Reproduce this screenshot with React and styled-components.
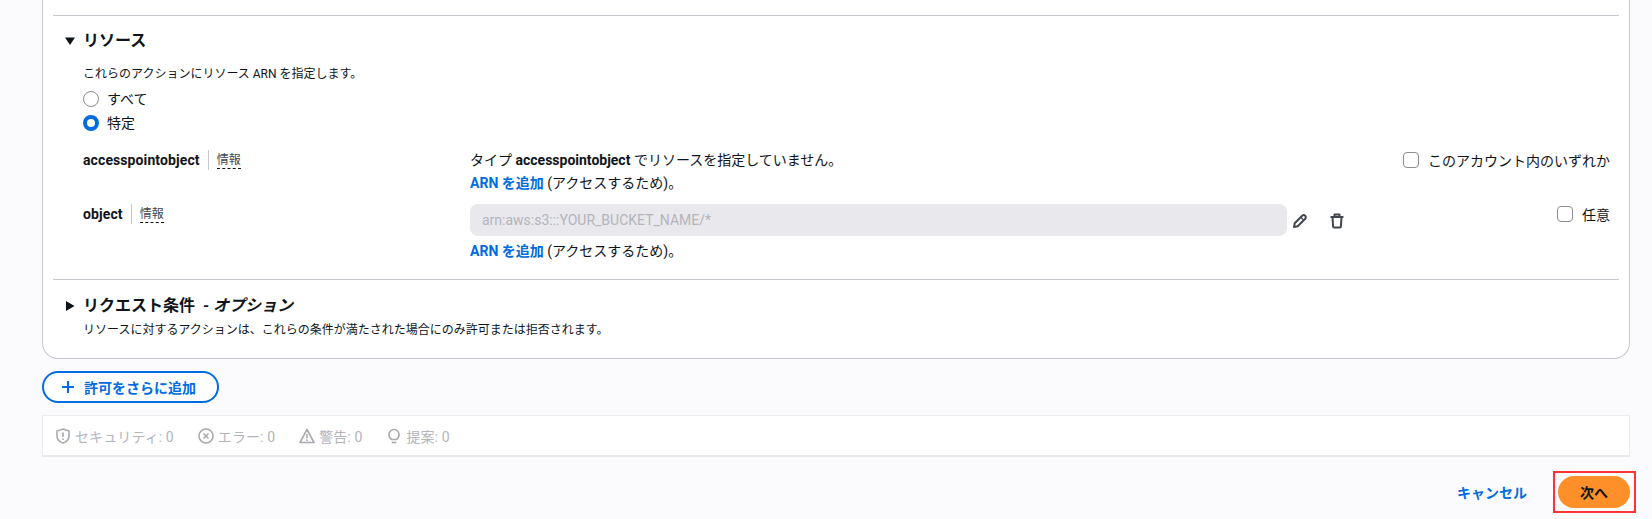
import React from "react";
import styled, { createGlobalStyle } from "styled-components";

const FONT = `Roboto, "Noto Sans CJK JP", sans-serif`;

const Global = createGlobalStyle`
  html, body { margin: 0; padding: 0; background: #fbfbfe; }
  body { font-family: ${FONT}; color: #0f141a; font-size: 14px; }
`;
const Page = styled.div`
  width: 1652px; height: 519px; overflow: hidden; box-sizing: border-box;
  padding: 0 22px 0 42px; display: flex; flex-direction: column;
`;
const Card = styled.section`
  background: #fff; border: 1px solid #c6c6cd; border-top: 0; border-radius: 0 0 16px 16px;
  height: 359px; box-sizing: border-box; padding: 15px 10px 0;
`;
const Divider = styled.hr`
  margin: 0; border: 0; border-top: 1px solid #c6c6cd;
`;
const Section = styled.div`
  padding: ${p => p.$top}px 0 0 30px; height: ${p => p.$height}px; box-sizing: border-box;
`;
const Heading = styled.h3`
  position: relative; margin: 0; font-size: 16px; line-height: 20px; font-weight: 700; color: #0f141a;
`;
const Caret = styled.svg`
  position: absolute; left: -19px; top: 4px; width: 12px; height: 12px; fill: #0f141a;
`;
const Option = styled.em`
  font-style: italic; margin-left: 8px;
`;
const Desc = styled.p`
  margin: ${p => p.$top}px 0 0; font-size: 12px; line-height: 16px; color: #0f141a;
`;
const RadioGroup = styled.div`
  display: flex; flex-direction: column; gap: 4px; margin-top: 7px;
`;
const RadioRow = styled.label`
  display: flex; align-items: center; gap: 8px; height: 20px; line-height: 20px; color: #0f141a; font-size: 14px;
`;
const RadioDot = styled.span`
  width: 16px; height: 16px; box-sizing: border-box; border-radius: 50%;
  background: #fff;
  border: ${p => (p.$on ? "4.5px solid #006ce0" : "1px solid #8c8c94")};
`;
const ResRow = styled.div`
  display: grid; grid-template-columns: 387px 1fr auto; align-items: start;
  margin-top: ${p => p.$top}px;
`;
const NameCell = styled.div`
  display: flex; align-items: center; height: 20px;
`;
const Name = styled.b`
  font-size: 14px; font-weight: 700; line-height: 20px; letter-spacing: 0.1px;
`;
const Sep = styled.span`
  width: 1px; height: 20px; background: #c6c6cd; margin: 0 8px;
`;
const Info = styled.span`
  font-size: 12px; line-height: 16px; color: #424650; border-bottom: 1px dashed #0f141a; height: 16px; margin-top: 1px;
`;
const Line = styled.div`
  font-size: 14px; line-height: 20px; color: #0f141a; margin-top: ${p => p.$top || 0}px;
`;
const Strong = styled.b`
  font-weight: 700;
`;
const Link = styled.a`
  color: #006ce0; font-weight: 700;
`;
const InputRow = styled.div`
  display: flex; align-items: center;
`;
const Field = styled.div`
  width: 817px; height: 32px; box-sizing: border-box; padding: 0 12px; display: flex; align-items: center;
  background: #e8e8ed; border-radius: 8px; color: #b4b4bb; font-size: 14px;
`;
const IconBtn = styled.span`
  display: flex; width: 16px; height: 16px; margin: 2px 0 0 ${p => p.$gap}px; color: #424650;
`;
const CheckRow = styled.label`
  display: flex; align-items: center; justify-content: flex-end; gap: 9px; height: 20px; font-size: 14px; color: #0f141a; padding-right: 9px;
`;
const CheckBox = styled.span`
  width: 16px; height: 16px; box-sizing: border-box; border: 1px solid #8c8c94; border-radius: 4px; background: #fff;
`;
const AddButton = styled.button`
  align-self: flex-start; margin-top: 12px; width: 177px; height: 32px; box-sizing: border-box;
  border: 2px solid #006ce0; border-radius: 20px; background: #fff; color: #006ce0;
  font: 700 14px ${FONT};
  display: flex; align-items: center; gap: 8px; padding: 0 0 0 16px;
`;
const StatusBar = styled.div`
  margin-top: 12px; height: 42px; box-sizing: border-box; background: #fff;
  border: 1px solid #ebebf0; border-bottom: 2px solid #e8e8ed;
  display: flex; align-items: center; gap: 24px; padding: 0 12px;
`;
const Stat = styled.span`
  display: inline-flex; align-items: center; gap: 4px; color: #b4b4bb; font-size: 14px; letter-spacing: 0.1px;
`;
const StatIcon = styled.svg`
  width: 16px; height: 16px; fill: none; stroke: #a9a9b1; stroke-width: 1.6;
`;
const Footer = styled.div`
  display: flex; justify-content: flex-end; align-items: center; margin-top: 14px; height: 42px;
`;
const Cancel = styled.a`
  color: #006ce0; font-weight: 700; font-size: 14px; margin-right: 26px;
`;
const Highlight = styled.div`
  width: 83px; height: 42px; box-sizing: border-box; border: 2px solid #f33; margin-right: -6px;
  display: flex; align-items: center; justify-content: flex-start; padding-left: 3px;
`;
const Primary = styled.button`
  width: 72px; height: 32px; border: 0; border-radius: 20px; background: #ff9029; color: #0f141a;
  font: 700 14px ${FONT}; padding: 0;
`;

const Pencil = () => (
  <svg viewBox="0 0 16 16" width="16" height="16" fill="none" stroke="currentColor" strokeWidth="2" strokeLinejoin="round">
    <path d="M2 14l.7-3.800 7.500-7.500a2 2 0 0 1 3 3l-7.500 7.500z" />
    <path d="M9 4.500l2.500 2.500" strokeWidth="1.200" />
  </svg>
);
const Trash = () => (
  <svg viewBox="0 0 16 16" width="16" height="16" fill="none" stroke="currentColor" strokeWidth="2" strokeLinejoin="round">
    <path d="M1.500 4h13M5.500 4V1.500h5V4M3.500 4l.6 9.500a1 1 0 0 0 1 1h5.800a1 1 0 0 0 1-1L12.500 4" />
  </svg>
);
const Shield = () => (
  <StatIcon viewBox="0 0 16 16">
    <path d="M8 1l6 2v5c0 3.500-2.500 5.800-6 7-3.500-1.200-6-3.500-6-7V3z" />
    <path d="M8 4.500v4.500M8 10.500v1.500" />
  </StatIcon>
);
const CircleX = () => (
  <StatIcon viewBox="0 0 16 16">
    <circle cx="8" cy="8" r="7" />
    <path d="M5.500 5.500l5 5M10.500 5.500l-5 5" />
  </StatIcon>
);
const Warn = () => (
  <StatIcon viewBox="0 0 16 16">
    <path d="M8 1.500L15 14.500H1z" strokeLinejoin="round" />
    <path d="M8 6v4.500M8 11.500v1.500" />
  </StatIcon>
);
const Bulb = () => (
  <StatIcon viewBox="0 0 16 16">
    <path d="M5.500 11.500C4 10.500 3 9 3 6.500a5 5 0 0 1 10 0c0 2.500-1 4-2.500 5z" />
    <path d="M5.800 14.500h4.400" />
  </StatIcon>
);

export default function App() {
  return (
    <Page>
      <Global />
      <Card>
        <Divider />
        <Section $top={15} $height={263}>
          <Heading>
            <Caret viewBox="0 0 12 12"><path d="M1 2.500h10L6 10z" /></Caret>
            リソース
          </Heading>
          <Desc $top={15}>これらのアクションにリソース ARN を指定します。</Desc>
          <RadioGroup>
            <RadioRow><RadioDot />すべて</RadioRow>
            <RadioRow><RadioDot $on />特定</RadioRow>
          </RadioGroup>
          <ResRow $top={17}>
            <NameCell><Name>accesspointobject</Name><Sep /><Info>情報</Info></NameCell>
            <div>
              <Line>タイプ <Strong>accesspointobject</Strong> でリソースを指定していません。</Line>
              <Line $top={3}><Link>ARN を追加</Link> (アクセスするため)。</Line>
            </div>
            <CheckRow><CheckBox />このアカウント内のいずれか</CheckRow>
          </ResRow>
          <ResRow $top={11}>
            <NameCell><Name>object</Name><Sep /><Info>情報</Info></NameCell>
            <div>
              <InputRow>
                <Field>arn:aws:s3:::YOUR_BUCKET_NAME/*</Field>
                <IconBtn $gap={5}><Pencil /></IconBtn>
                <IconBtn $gap={21}><Trash /></IconBtn>
              </InputRow>
              <Line $top={5}><Link>ARN を追加</Link> (アクセスするため)。</Line>
            </div>
            <CheckRow><CheckBox />任意</CheckRow>
          </ResRow>
        </Section>
        <Divider />
        <Section $top={16} $height={65}>
          <Heading>
            <Caret viewBox="0 0 12 12"><path d="M2 1v10L10.500 6z" /></Caret>
            リクエスト条件<Option>- オプション</Option>
          </Heading>
          <Desc $top={6}>リソースに対するアクションは、これらの条件が満たされた場合にのみ許可または拒否されます。</Desc>
        </Section>
      </Card>
      <AddButton>
        <svg viewBox="0 0 16 16" width="16" height="16" fill="none" stroke="currentColor" strokeWidth="2"><path d="M8 2v12M2 8h12" /></svg>
        許可をさらに追加
      </AddButton>
      <StatusBar>
        <Stat><Shield />セキュリティ: 0</Stat>
        <Stat><CircleX />エラー: 0</Stat>
        <Stat><Warn />警告: 0</Stat>
        <Stat><Bulb />提案: 0</Stat>
      </StatusBar>
      <Footer>
        <Cancel>キャンセル</Cancel>
        <Highlight><Primary>次へ</Primary></Highlight>
      </Footer>
    </Page>
  );
}
